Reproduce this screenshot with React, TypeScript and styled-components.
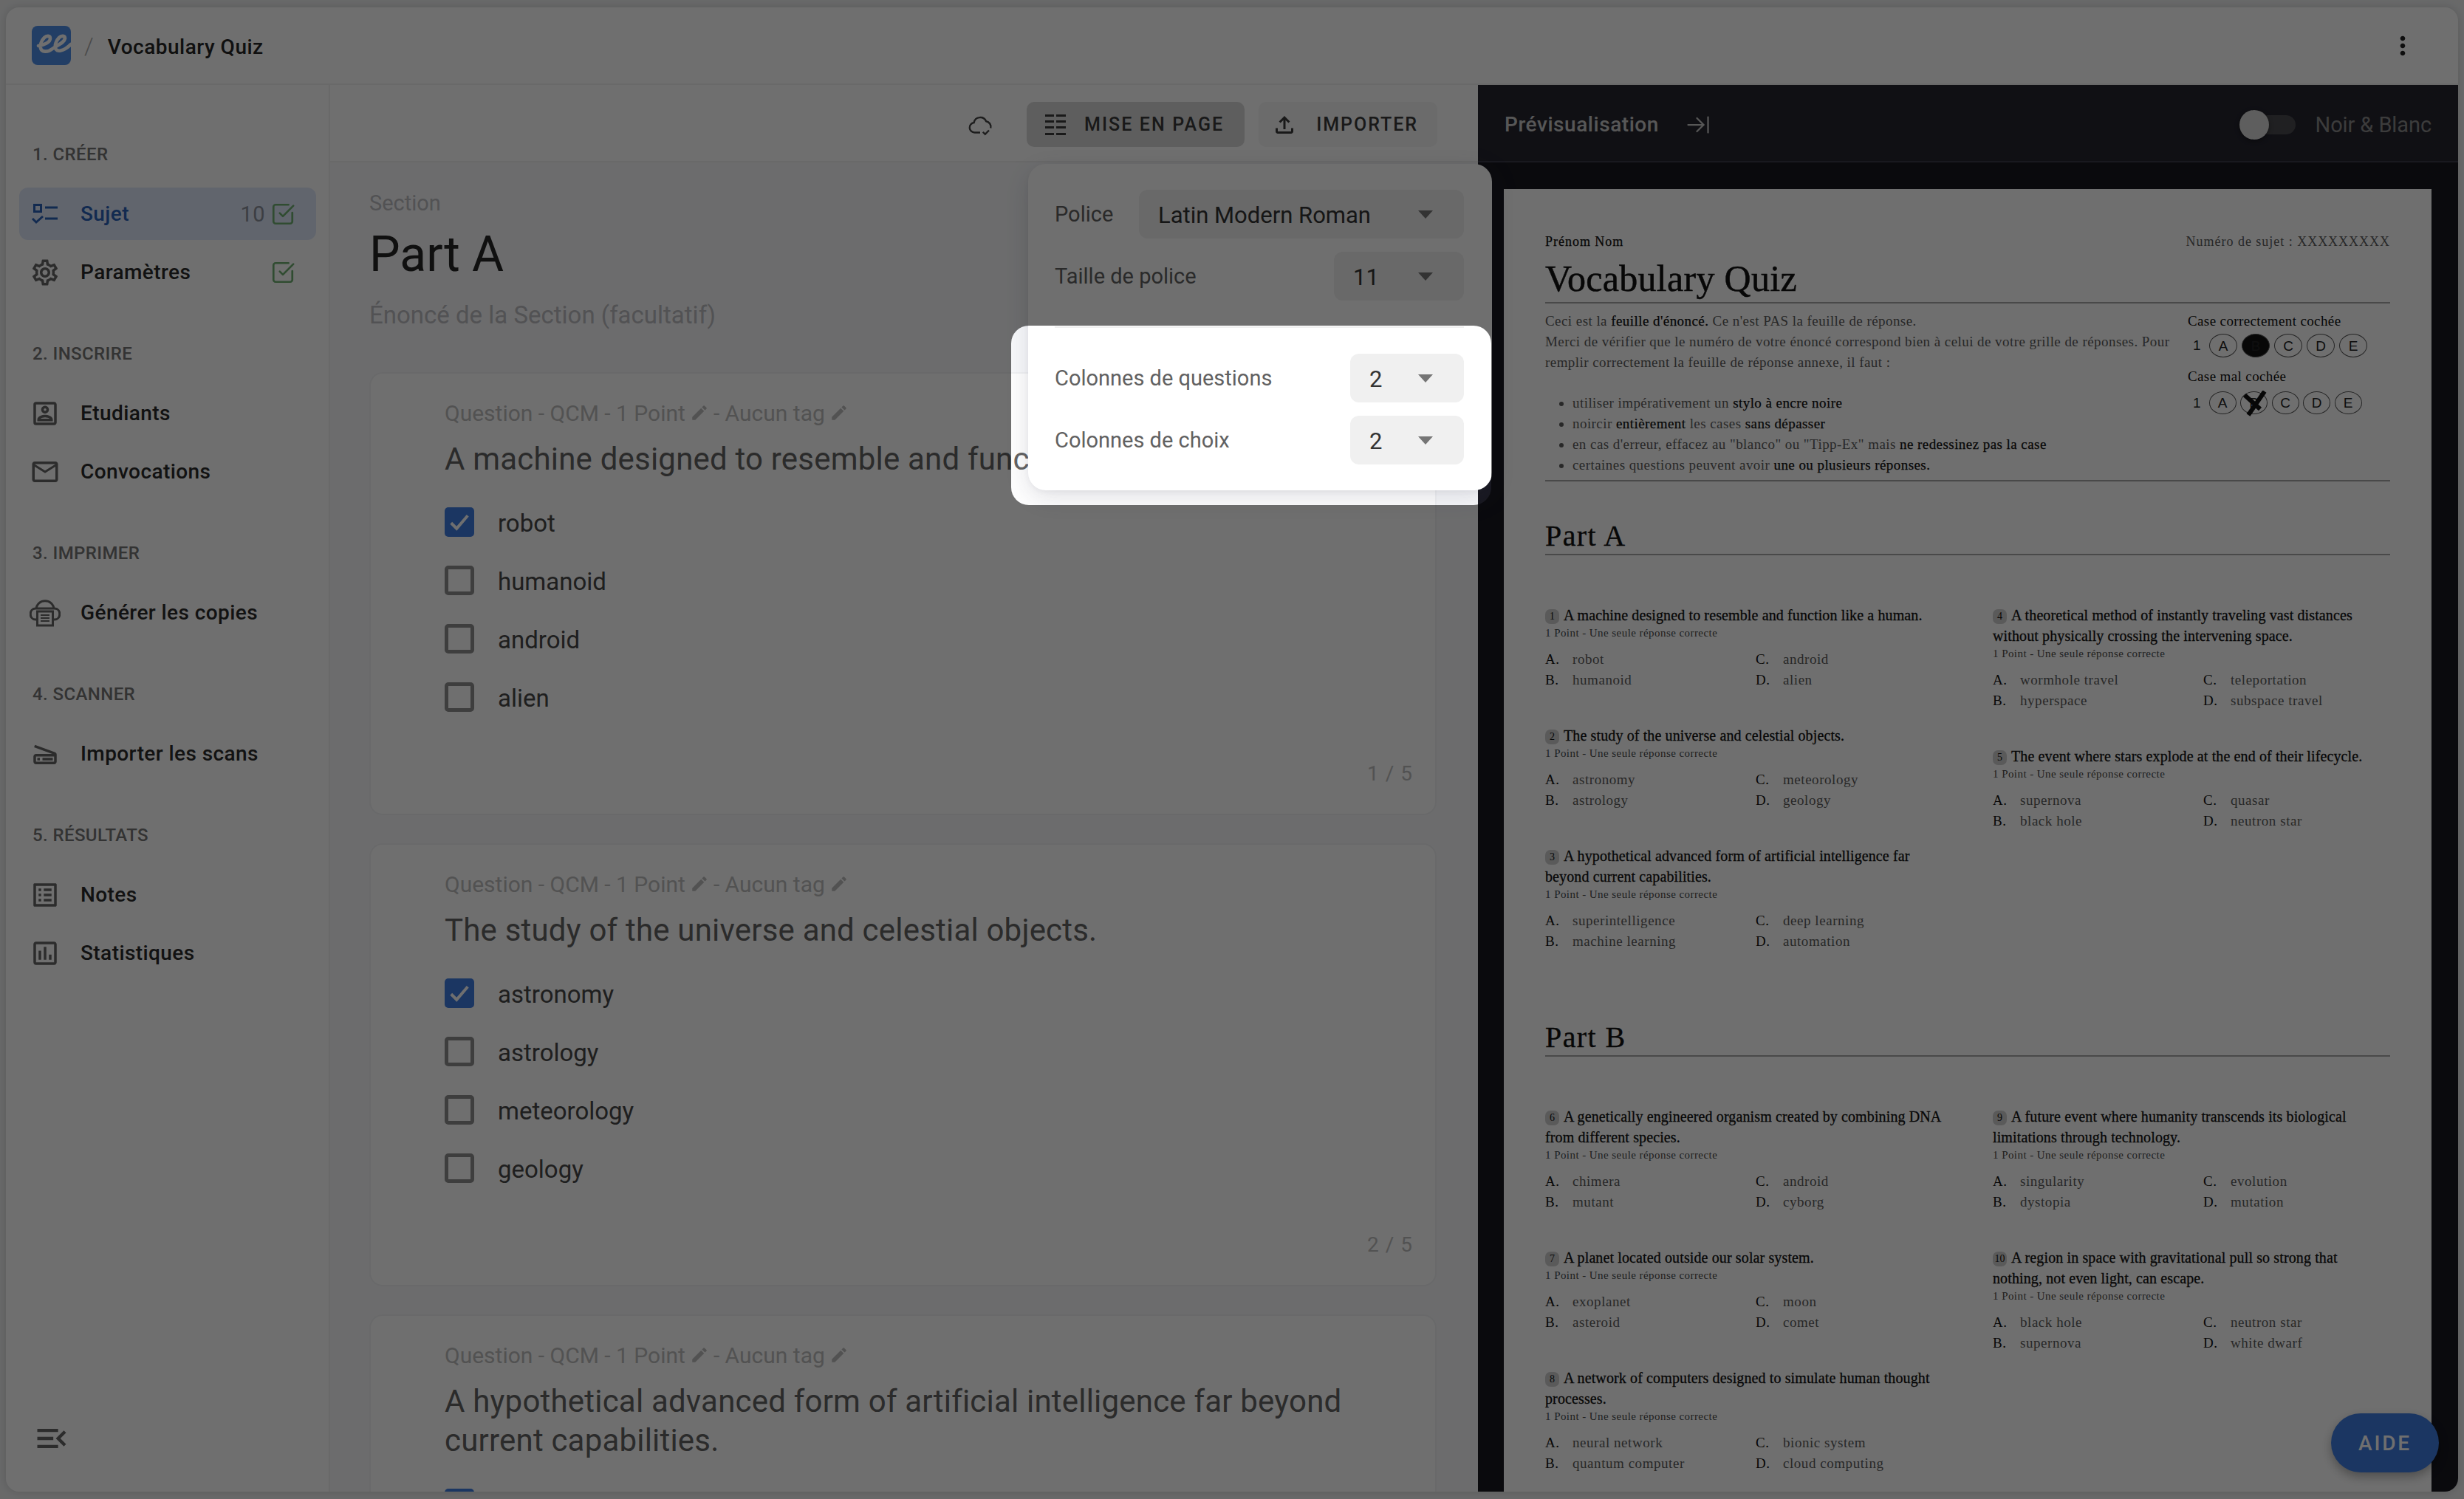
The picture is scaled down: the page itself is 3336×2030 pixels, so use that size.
import React, { FC, ReactNode } from 'react'
import styled, { createGlobalStyle } from 'styled-components'
import { ArrowRightToLine, SquareCheckBig } from 'lucide-react'
import {
  MdEdit,
  MdMailOutline,
  MdMenuOpen,
  MdMoreVert,
  MdOutlineAssessment,
  MdOutlineFileUpload,
  MdOutlineListAlt,
  MdOutlinePortrait,
  MdOutlineScanner,
  MdOutlineSettings,
} from 'react-icons/md'

const GlobalStyle = createGlobalStyle`
  html, body {
    margin: 0;
    width: 3336px;
    height: 2030px;
    overflow: hidden;
    background: #f0f1f2;
    font-family: Roboto, "Liberation Sans", sans-serif;
  }
  * { box-sizing: border-box; }
`

const Frame = styled.div`
  position: relative;
  width: 3336px;
  height: 2030px;
  padding: 10px 8px 10px 8px;
  overflow: hidden;
`

const AppWindow = styled.div`
  width: 100%;
  height: 100%;
  display: flex;
  flex-direction: column;
  background: #fff;
  border-radius: 18px;
  overflow: hidden;
  box-shadow: 0 0 12px rgba(0, 0, 0, 0.14);
`

const TopBar = styled.header`
  flex: 0 0 105px;
  display: flex;
  align-items: center;
  padding: 0 55px 0 35px;
  border-bottom: 2px solid #f0f0f0;
  color: #212121;
`

const Slash = styled.span`
  margin: 0 19px 0 18px;
  font-size: 32px;
  color: #aaa;
  font-weight: 300;
`

const AppTitle = styled.span`
  padding-top: 3px;
  font-size: 28px;
  font-weight: 500;
  letter-spacing: 0.5px;
  color: #262626;
`

const Kebab = styled.span`
  margin-left: auto;
  display: flex;
  color: #222;
`

const Body = styled.div`
  flex: 1;
  display: flex;
  min-height: 0;
`

const Sidebar = styled.nav`
  flex: 0 0 439px;
  display: flex;
  flex-direction: column;
  padding: 79px 17px 46px 18px;
  border-right: 2px solid #f0f0f0;
`

const NavSection = styled.section`
  display: flex;
  flex-direction: column;
  gap: 8px;
  & + & {
    margin-top: 60px;
  }
`

const NavLabel = styled.div`
  height: 30px;
  line-height: 30px;
  margin: 0 0 22px 18px;
  font-size: 24px;
  font-weight: 500;
  letter-spacing: 0.4px;
  color: #757575;
`

const NavItem = styled.div<{ $active?: boolean }>`
  height: 71px;
  display: flex;
  align-items: center;
  padding: 0 28px 0 14px;
  border-radius: 12px;
  background: ${p => (p.$active ? '#dfe8fb' : 'transparent')};
  color: ${p => (p.$active ? '#2a62b8' : '#2b2b2b')};
  font-size: 28px;
  font-weight: 500;
  letter-spacing: 0.42px;
`

const NavIcon = styled.span<{ $active?: boolean }>`
  width: 42px;
  margin-right: 27px;
  display: flex;
  justify-content: center;
  color: ${p => (p.$active ? '#2a62b8' : '#666')};
`

const NavCount = styled.span`
  margin-left: auto;
  margin-right: 7px;
  font-size: 29px;
  font-weight: 400;
  letter-spacing: 0.5px;
  color: #8b8f9a;
`

const NavCheck = styled.span<{ $pushed?: boolean }>`
  display: flex;
  color: #6fae72;
  margin-left: ${p => (p.$pushed ? 'auto' : '0')};
`

const CollapseButton = styled.span`
  margin-top: auto;
  margin-left: 18px;
  display: flex;
  color: #666;
`

const Main = styled.main`
  flex: 0 0 1554px;
  display: flex;
  flex-direction: column;
  min-height: 0;
`

const Toolbar = styled.div`
  flex: 0 0 105px;
  display: flex;
  align-items: center;
  justify-content: flex-end;
  gap: 19px;
  padding: 4px 55px 0 0;
  border-bottom: 2px solid #f0f0f0;
`

const CloudIcon = styled.span`
  margin-right: 26px;
  display: flex;
  color: #444;
`

const ToolButton = styled.div<{ $active?: boolean }>`
  height: 61px;
  display: flex;
  align-items: center;
  gap: 25px;
  padding: 0 ${p => (p.$active ? '28px 0 25px' : '26px 0 17px')};
  border-radius: 10px;
  background: ${p => (p.$active ? '#d9d9d9' : '#f6f6f6')};
  color: #3a3a3a;
  font-size: 25px;
  font-weight: 500;
  letter-spacing: ${p => (p.$active ? '2.1px' : '1.95px')};
`

const Content = styled.div`
  flex: 1;
  min-height: 0;
  overflow: hidden;
  padding: 37px 56px 0 53px;
  background: #f8f9fb;
`

const SectionLabel = styled.div`
  font-size: 29px;
  line-height: 36px;
  color: #bcbcc0;
`

const SectionTitle = styled.h1`
  margin: 14px 0 0;
  font-size: 66px;
  line-height: 76px;
  font-weight: 400;
  color: #262626;
`

const SectionHint = styled.div`
  margin: 22px 0 55px;
  font-size: 33px;
  line-height: 44px;
  color: #bcbcc0;
`

const Card = styled.article`
  height: 600px;
  margin-bottom: 38px;
  display: flex;
  flex-direction: column;
  padding: 34px 30px 38px 100px;
  background: #fff;
  border: 2px solid #f1f2f4;
  border-radius: 18px;
`

const CardMeta = styled.div`
  height: 38px;
  display: flex;
  align-items: center;
  gap: 6px;
  font-size: 30px;
  color: #bdbdbd;
`

const CardTitle = styled.div`
  margin: 17px 0 39px;
  width: 1260px;
  font-size: 42px;
  line-height: 53px;
  letter-spacing: 0.2px;
  color: #636363;
`

const OptionList = styled.div`
  display: flex;
  flex-direction: column;
  gap: 39px;
`

const OptionRow = styled.div`
  height: 40px;
  display: flex;
  align-items: center;
  gap: 32px;
  font-size: 33px;
  color: #474747;
`

const OptionLabel = styled.span`
  margin-top: 3px;
`

const CheckBox = styled.span<{ $checked?: boolean }>`
  width: 40px;
  height: 40px;
  display: flex;
  align-items: center;
  justify-content: center;
  border-radius: 5px;
  border: ${p => (p.$checked ? 'none' : '5px solid #8f8f8f')};
  background: ${p => (p.$checked ? '#3f7de0' : 'transparent')};
  color: #fff;
`

const CardCounter = styled.div`
  margin-top: auto;
  align-self: flex-end;
  font-size: 28px;
  letter-spacing: 1px;
  color: #bdbdbd;
`

const Preview = styled.aside`
  flex: 1;
  display: flex;
  flex-direction: column;
  min-height: 0;
  background: #17171f;
`

const PreviewHeader = styled.div`
  flex: 0 0 105px;
  display: flex;
  align-items: center;
  padding: 4px 36px 0;
  background: #25252f;
  border-bottom: 2px solid #3a3a48;
`

const PreviewTitle = styled.span`
  font-size: 28px;
  font-weight: 500;
  letter-spacing: 0.55px;
  color: #c9c9c9;
`

const PreviewArrow = styled.span`
  margin-left: 35px;
  display: flex;
  color: #c9c9c9;
`

const Toggle = styled.span`
  position: relative;
  margin-left: auto;
  width: 74px;
  height: 26px;
  border-radius: 13px;
  background: #4a4a4e;
`

const ToggleThumb = styled.span`
  position: absolute;
  left: -2px;
  top: -7px;
  width: 40px;
  height: 40px;
  border-radius: 50%;
  background: #d7d7d7;
  box-shadow: 0 2px 6px rgba(0, 0, 0, 0.4);
`

const ToggleLabel = styled.span`
  margin-left: 27px;
  font-size: 29px;
  letter-spacing: -0.1px;
  color: #8a8a8a;
`

const PaperWrap = styled.div`
  flex: 1;
  min-height: 0;
  overflow: hidden;
  padding: 36px 36px 0 35px;
`

const Paper = styled.div`
  height: 100%;
  overflow: hidden;
  padding: 61px 56px 0;
  background: #fff;
  font-family: "Liberation Serif", serif;
  color: #5c5c5c;
`

const PaperHead = styled.div`
  display: flex;
  justify-content: space-between;
  font-size: 18px;
  line-height: 20px;
  letter-spacing: 0.98px;
`

const Strong = styled.b`
  font-weight: 400;
  color: #111;
  -webkit-text-stroke: 0.25px #111;
`

const PaperTitle = styled.h2`
  margin: 15px 0 0;
  padding-bottom: 7px;
  border-bottom: 2px solid #a8a8a8;
  font-size: 50px;
  line-height: 50px;
  font-weight: 400;
  letter-spacing: 0.3px;
  color: #111;
  -webkit-text-stroke: 0.5px #111;
`

const IntroRow = styled.div`
  display: flex;
  margin-top: 10px;
  padding-bottom: 6px;
  border-bottom: 2px solid #a8a8a8;
`

const IntroText = styled.div`
  flex: 0 0 870px;
  font-size: 19px;
  line-height: 28px;
  letter-spacing: 0.44px;
`

const IntroLine = styled.div`
  white-space: pre;
`

const BulletList = styled.ul`
  margin: 27px 0 0;
  padding: 0 0 0 37px;
  color: #5c5c5c;
`

const Legend = styled.div`
  flex: 1;
  font-size: 19px;
  line-height: 28px;
  letter-spacing: 0.38px;
  color: #111;
`

const BubbleRow = styled.div<{ $small?: boolean }>`
  display: flex;
  align-items: center;
  gap: ${p => (p.$small ? '5.5px' : '6px')};
  margin: ${p => (p.$small ? '6px 0 0' : '3px 0 12px')};
  padding-left: 7px;
  font-family: "Liberation Sans", sans-serif;
  font-size: 19px;
  letter-spacing: 0;
  color: #222;
`

const BubbleIndex = styled.span`
  width: 16px;
`

const Bubble = styled.span<{ $small?: boolean; $filled?: boolean }>`
  position: relative;
  width: ${p => (p.$small ? '37px' : '38px')};
  height: ${p => (p.$small ? '31px' : '32px')};
  display: flex;
  align-items: center;
  justify-content: center;
  border: 1px solid #555;
  border-radius: 50%;
  background: ${p => (p.$filled ? '#111' : 'transparent')};
  font-size: 19px;
  line-height: 1;
`

const CrossMark = styled.svg`
  position: absolute;
  left: -1px;
  top: -2px;
`

const PartTitle = styled.h3<{ $spaced?: boolean }>`
  margin: ${p => (p.$spaced ? '94px' : '52px')} 0 67px;
  padding-bottom: 2px;
  border-bottom: 2px solid #a8a8a8;
  font-size: 40px;
  line-height: 44px;
  font-weight: 400;
  letter-spacing: 1.4px;
  color: #111;
  -webkit-text-stroke: 0.35px #111;
`

const QuestionColumns = styled.div`
  display: grid;
  grid-template-columns: 606px 1fr;
`

const QuestionColumn = styled.div`
  display: flex;
  flex-direction: column;
  gap: 47px;
`

const QuestionLine = styled.div`
  font-size: 20px;
  line-height: 28px;
  letter-spacing: 0.12px;
  color: #111;
  -webkit-text-stroke: 0.3px #111;
  white-space: pre;
`

const NumberBadge = styled.span`
  display: inline-flex;
  min-width: 19px;
  height: 20px;
  margin-right: 6px;
  padding: 0 2px;
  align-items: center;
  justify-content: center;
  vertical-align: 1px;
  border-radius: 7px;
  background: #cfcfcf;
  font-size: 14px;
  -webkit-text-stroke: 0;
`

const QuestionSub = styled.div`
  font-size: 15px;
  line-height: 20px;
  letter-spacing: 0.44px;
  color: #4a4a4a;
`

const ChoiceGrid = styled.div`
  margin-top: 12px;
  display: grid;
  grid-template-columns: 285px 1fr;
  grid-template-rows: 28px 28px;
  grid-auto-flow: column;
`

const Choice = styled.div`
  display: flex;
  font-size: 19px;
  line-height: 28px;
  letter-spacing: 0.55px;
`

const ChoiceKey = styled.span`
  flex: 0 0 37px;
  color: #111;
`

const Popup = styled.div`
  position: absolute;
  left: 1392px;
  top: 222px;
  width: 628px;
  height: 442px;
  display: flex;
  flex-direction: column;
  padding: 35px 38px 0 36px;
  background: #fff;
  border-radius: 24px;
  box-shadow: 0 10px 36px rgba(60, 60, 90, 0.16), 0 2px 6px rgba(60, 60, 90, 0.06);
`

const PopupRow = styled.div`
  height: 66px;
  display: flex;
  align-items: center;
  margin-bottom: 18px;
`

const PopupDivider = styled.div`
  height: 2px;
  margin: 17px 0 35px;
  background: #f0f0f0;
`

const PopupLabel = styled.span`
  font-size: 29px;
  letter-spacing: 0;
  color: #616161;
`

const Select = styled.div<{ $width: number }>`
  width: ${p => p.$width}px;
  height: 66px;
  margin-left: auto;
  display: flex;
  align-items: center;
  justify-content: space-between;
  padding: 0 42px 0 26px;
  background: #f0f0f0;
  border-radius: 12px;
  font-size: 31px;
  color: #333;
`

const SelectValue = styled.span`
  margin-top: 3px;
`

const SelectArrow = styled.span`
  width: 0;
  height: 0;
  border-left: 10px solid transparent;
  border-right: 10px solid transparent;
  border-top: 11px solid #757575;
`

const HelpButton = styled.div`
  position: absolute;
  left: 3156px;
  top: 1914px;
  width: 146px;
  height: 80px;
  display: flex;
  align-items: center;
  justify-content: center;
  border-radius: 40px;
  background: #3f7de0;
  color: #fff;
  font-size: 28px;
  font-weight: 500;
  letter-spacing: 2.8px;
  box-shadow: 0 6px 14px rgba(0, 0, 0, 0.3);
`

const Spotlight = styled.div`
  position: absolute;
  left: 1369px;
  top: 441px;
  width: 650px;
  height: 243px;
  border-radius: 24px;
  box-shadow: 0 0 0 4000px rgba(0, 0, 0, 0.565);
`

const AppLogo: FC = () => (
  <svg width={53} height={53} viewBox="0 0 53 53">
    <rect width={53} height={53} rx={8} fill="#4f8fe8" />
    <path
      d="M9 27C17 26 25 22 25 17C25 13 20 13 17 16C13 20 11 26 12 30C13 36 22 36 28 31C35 26 44 23 45 17C45 13 40 13 37 16C33 20 31 26 32 30C33 36 43 35 53 25"
      fill="none"
      stroke="#fff"
      strokeWidth={4.6}
      strokeLinecap="round"
    />
  </svg>
)

const SubjectIcon: FC = () => (
  <svg width={36} height={28} viewBox="0 0 36 28" fill="none" stroke="currentColor" strokeWidth={3}>
    <rect x={3.5} y={1.5} width={9} height={9} />
    <path d="M1 20l5 5 9-8" />
    <path d="M18 5h17M18 20h17" />
  </svg>
)

const PrinterIcon: FC = () => (
  <svg width={42} height={38} viewBox="0 0 42 38" fill="none" stroke="currentColor" strokeWidth={3}>
    <path d="M9 14C10 -1 32 -1 33 14" />
    <path d="M10 28H8C-1 28 -1 13 8 13H34C43 13 43 28 34 28H32" />
    <rect x={10.5} y={17} width={21} height={19} />
    <path d="M15 22h12M15 26h12M15 30h12" strokeWidth={2} />
  </svg>
)

const LayoutIcon: FC = () => (
  <svg width={28} height={28} viewBox="0 0 28 28" fill="currentColor">
    <path d="M0 0h12v3H0zM15 0h13v3H15zM0 8h12v3H0zM15 8h13v3H15zM0 16h12v3H0zM15 16h13v3H15zM0 25h12v3H0zM15 25h13v3H15z" />
  </svg>
)

const CloudCheckIcon: FC = () => (
  <svg width={36} height={36} viewBox="0 0 24 24" fill="none" stroke="currentColor" strokeWidth={1.6}>
    <path d="M12 19H7a4.5 4.5 0 0 1-.6-8.96 5.8 5.8 0 0 1 11-1.2A5 5 0 0 1 21.5 15" />
    <path d="M14.5 18.5l2 2 3.5-3.5" />
  </svg>
)

const CheckMark: FC = () => (
  <svg width={30} height={30} viewBox="0 0 24 24" fill="none" stroke="currentColor" strokeWidth={3.2}>
    <path d="M3 13l6 6L21 5" />
  </svg>
)

interface NavEntry {
  label: string
  icon: ReactNode
  active?: boolean
  count?: number
  done?: boolean
}

const navSections: { title: string; items: NavEntry[] }[] = [
  {
    title: '1. CRÉER',
    items: [
      { label: 'Sujet', icon: <SubjectIcon />, active: true, count: 10, done: true },
      { label: 'Paramètres', icon: <MdOutlineSettings size={42} />, done: true },
    ],
  },
  {
    title: '2. INSCRIRE',
    items: [
      { label: 'Etudiants', icon: <MdOutlinePortrait size={42} /> },
      { label: 'Convocations', icon: <MdMailOutline size={42} /> },
    ],
  },
  { title: '3. IMPRIMER', items: [{ label: 'Générer les copies', icon: <PrinterIcon /> }] },
  { title: '4. SCANNER', items: [{ label: 'Importer les scans', icon: <MdOutlineScanner size={42} /> }] },
  {
    title: '5. RÉSULTATS',
    items: [
      { label: 'Notes', icon: <MdOutlineListAlt size={42} /> },
      { label: 'Statistiques', icon: <MdOutlineAssessment size={42} /> },
    ],
  },
]

const cards = [
  {
    title: 'A machine designed to resemble and function like a human.',
    options: ['robot', 'humanoid', 'android', 'alien'],
  },
  {
    title: 'The study of the universe and celestial objects.',
    options: ['astronomy', 'astrology', 'meteorology', 'geology'],
  },
  {
    title: 'A hypothetical advanced form of artificial intelligence far beyond current capabilities.',
    options: ['superintelligence', 'machine learning', 'deep learning', 'automation'],
  },
]

interface PaperQuestion {
  n: number
  lines: string[]
  choices: [string, string, string, string]
}

const partA: PaperQuestion[][] = [
  [
    { n: 1, lines: ['A machine designed to resemble and function like a human.'], choices: ['robot', 'humanoid', 'android', 'alien'] },
    { n: 2, lines: ['The study of the universe and celestial objects.'], choices: ['astronomy', 'astrology', 'meteorology', 'geology'] },
    { n: 3, lines: ['A hypothetical advanced form of artificial intelligence far', 'beyond current capabilities.'], choices: ['superintelligence', 'machine learning', 'deep learning', 'automation'] },
  ],
  [
    { n: 4, lines: ['A theoretical method of instantly traveling vast distances', 'without physically crossing the intervening space.'], choices: ['wormhole travel', 'hyperspace', 'teleportation', 'subspace travel'] },
    { n: 5, lines: ['The event where stars explode at the end of their lifecycle.'], choices: ['supernova', 'black hole', 'quasar', 'neutron star'] },
  ],
]

const partB: PaperQuestion[][] = [
  [
    { n: 6, lines: ['A genetically engineered organism created by combining DNA', 'from different species.'], choices: ['chimera', 'mutant', 'android', 'cyborg'] },
    { n: 7, lines: ['A planet located outside our solar system.'], choices: ['exoplanet', 'asteroid', 'moon', 'comet'] },
    { n: 8, lines: ['A network of computers designed to simulate human thought', 'processes.'], choices: ['neural network', 'quantum computer', 'bionic system', 'cloud computing'] },
  ],
  [
    { n: 9, lines: ['A future event where humanity transcends its biological', 'limitations through technology.'], choices: ['singularity', 'dystopia', 'evolution', 'mutation'] },
    { n: 10, lines: ['A region in space with gravitational pull so strong that', 'nothing, not even light, can escape.'], choices: ['black hole', 'supernova', 'neutron star', 'white dwarf'] },
  ],
]

const QuestionBlock: FC<{ question: PaperQuestion }> = ({ question }) => (
  <div>
    {question.lines.map((line, i) => (
      <QuestionLine key={line}>
        {i === 0 && <NumberBadge>{question.n}</NumberBadge>}
        {line}
      </QuestionLine>
    ))}
    <QuestionSub>1 Point - Une seule réponse correcte</QuestionSub>
    <ChoiceGrid>
      {question.choices.map((choice, i) => (
        <Choice key={choice}>
          <ChoiceKey>{'ABCD'[i]}.</ChoiceKey>
          {choice}
        </Choice>
      ))}
    </ChoiceGrid>
  </div>
)

const PaperColumns: FC<{ columns: PaperQuestion[][] }> = ({ columns }) => (
  <QuestionColumns>
    {columns.map(column => (
      <QuestionColumn key={column[0].n}>
        {column.map(q => (
          <QuestionBlock key={q.n} question={q} />
        ))}
      </QuestionColumn>
    ))}
  </QuestionColumns>
)

const App: FC = () => {
  return (
    <Frame>
      <GlobalStyle />
      <AppWindow>
        <TopBar>
          <AppLogo />
          <Slash>/</Slash>
          <AppTitle>Vocabulary Quiz</AppTitle>
          <Kebab>
            <MdMoreVert size={40} />
          </Kebab>
        </TopBar>
        <Body>
          <Sidebar>
            {navSections.map(section => (
              <NavSection key={section.title}>
                <NavLabel>{section.title}</NavLabel>
                {section.items.map(item => (
                  <NavItem key={item.label} $active={item.active}>
                    <NavIcon $active={item.active}>{item.icon}</NavIcon>
                    {item.label}
                    {item.count !== undefined && <NavCount>{item.count}</NavCount>}
                    {item.done && (
                      <NavCheck $pushed={item.count === undefined}>
                        <SquareCheckBig size={34} strokeWidth={1.9} />
                      </NavCheck>
                    )}
                  </NavItem>
                ))}
              </NavSection>
            ))}
            <CollapseButton>
              <MdMenuOpen size={52} />
            </CollapseButton>
          </Sidebar>
          <Main>
            <Toolbar>
              <CloudIcon>
                <CloudCheckIcon />
              </CloudIcon>
              <ToolButton $active>
                <LayoutIcon />
                MISE EN PAGE
              </ToolButton>
              <ToolButton>
                <MdOutlineFileUpload size={36} />
                IMPORTER
              </ToolButton>
            </Toolbar>
            <Content>
              <SectionLabel>Section</SectionLabel>
              <SectionTitle>Part A</SectionTitle>
              <SectionHint>Énoncé de la Section (facultatif)</SectionHint>
              {cards.map((card, index) => (
                <Card key={card.title}>
                  <CardMeta>
                    <span>Question - QCM - 1 Point</span>
                    <MdEdit size={26} />
                    <span>- Aucun tag</span>
                    <MdEdit size={26} />
                  </CardMeta>
                  <CardTitle>{card.title}</CardTitle>
                  <OptionList>
                    {card.options.map((option, i) => (
                      <OptionRow key={option}>
                        <CheckBox $checked={i === 0}>{i === 0 && <CheckMark />}</CheckBox>
                        <OptionLabel>{option}</OptionLabel>
                      </OptionRow>
                    ))}
                  </OptionList>
                  <CardCounter>{index + 1} / 5</CardCounter>
                </Card>
              ))}
            </Content>
          </Main>
          <Preview>
            <PreviewHeader>
              <PreviewTitle>Prévisualisation</PreviewTitle>
              <PreviewArrow>
                <ArrowRightToLine size={36} strokeWidth={1.5} />
              </PreviewArrow>
              <Toggle>
                <ToggleThumb />
              </Toggle>
              <ToggleLabel>Noir &amp; Blanc</ToggleLabel>
            </PreviewHeader>
            <PaperWrap>
              <Paper>
                <PaperHead>
                  <Strong>Prénom Nom</Strong>
                  <span>Numéro de sujet : XXXXXXXXX</span>
                </PaperHead>
                <PaperTitle>Vocabulary Quiz</PaperTitle>
                <IntroRow>
                  <IntroText>
                    <IntroLine>
                      Ceci est la <Strong>feuille d'énoncé.</Strong> Ce n'est PAS la feuille de réponse.
                    </IntroLine>
                    <IntroLine>Merci de vérifier que le numéro de votre énoncé correspond bien à celui de votre grille de réponses. Pour</IntroLine>
                    <IntroLine>remplir correctement la feuille de réponse annexe, il faut :</IntroLine>
                    <BulletList>
                      <li>utiliser impérativement un <Strong>stylo à encre noire</Strong></li>
                      <li>noircir <Strong>entièrement</Strong> les cases <Strong>sans dépasser</Strong></li>
                      <li>en cas d'erreur, effacez au "blanco" ou "Tipp-Ex" mais <Strong>ne redessinez pas la case</Strong></li>
                      <li>certaines questions peuvent avoir <Strong>une ou plusieurs réponses.</Strong></li>
                    </BulletList>
                  </IntroText>
                  <Legend>
                    Case correctement cochée
                    <BubbleRow>
                      <BubbleIndex>1</BubbleIndex>
                      {['A', 'B', 'C', 'D', 'E'].map(letter => (
                        <Bubble key={letter} $filled={letter === 'B'}>{letter}</Bubble>
                      ))}
                    </BubbleRow>
                    Case mal cochée
                    <BubbleRow $small>
                      <BubbleIndex>1</BubbleIndex>
                      {['A', 'B', 'C', 'D', 'E'].map(letter => (
                        <Bubble key={letter} $small>
                          {letter}
                          {letter === 'B' && (
                            <CrossMark width={38} height={35} viewBox="0 0 38 35">
                              <path d="M6 6L27 25M33 1L11 33" stroke="#111" strokeWidth={6} fill="none" />
                            </CrossMark>
                          )}
                        </Bubble>
                      ))}
                    </BubbleRow>
                  </Legend>
                </IntroRow>
                <PartTitle>Part A</PartTitle>
                <PaperColumns columns={partA} />
                <PartTitle $spaced>Part B</PartTitle>
                <PaperColumns columns={partB} />
              </Paper>
            </PaperWrap>
          </Preview>
        </Body>
      </AppWindow>
      <Popup>
        <PopupRow>
          <PopupLabel>Police</PopupLabel>
          <Select $width={440}>
            <SelectValue>Latin Modern Roman</SelectValue>
            <SelectArrow />
          </Select>
        </PopupRow>
        <PopupRow>
          <PopupLabel>Taille de police</PopupLabel>
          <Select $width={176}>
            <SelectValue>11</SelectValue>
            <SelectArrow />
          </Select>
        </PopupRow>
        <PopupDivider />
        <PopupRow>
          <PopupLabel>Colonnes de questions</PopupLabel>
          <Select $width={154}>
            <SelectValue>2</SelectValue>
            <SelectArrow />
          </Select>
        </PopupRow>
        <PopupRow>
          <PopupLabel>Colonnes de choix</PopupLabel>
          <Select $width={154}>
            <SelectValue>2</SelectValue>
            <SelectArrow />
          </Select>
        </PopupRow>
      </Popup>
      <HelpButton>AIDE</HelpButton>
      <Spotlight />
    </Frame>
  )
}

export default App
